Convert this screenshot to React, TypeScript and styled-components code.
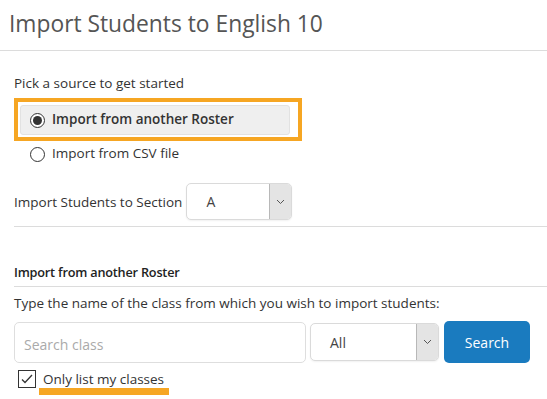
import React from "react";
import styled, { createGlobalStyle } from "styled-components";

const GlobalStyle = createGlobalStyle`
  html, body {
    margin: 0;
    padding: 0;
    background: #fff;
    font-family: "Open Sans", "Liberation Sans", sans-serif;
    color: #333;
  }
`;

const Page = styled.div`
  width: 547px;
  height: 399px;
  overflow: hidden;
`;

const Header = styled.header`
  height: 50px;
  border-bottom: 1px solid #dcdcdc;
  padding-left: 9px;
  display: flex;
  align-items: center;
`;

const Title = styled.h1`
  margin: 0 0 4px;
  font-size: 22.8px;
  font-weight: 400;
  color: #555;
`;

const Body = styled.div`
  padding-left: 14px;
`;

const Label = styled.div<{ top?: number }>`
  font-size: 13.5px;
  line-height: 18px;
  color: #333;
  margin-top: ${({ top }) => top ?? 0}px;
`;

const Highlight = styled.div`
  width: 270px;
  height: 32px;
  border: 4px solid #f6a623;
  padding: 3px 8px 0 2px;
  margin-top: 6px;
`;

const OptionRow = styled.label<{ selected?: boolean }>`
  display: flex;
  align-items: center;
  gap: 7px;
  height: 30px;
  box-sizing: border-box;
  padding-left: 9px;
  font-size: 13.5px;
  color: #333;
  font-weight: ${({ selected }) => (selected ? 600 : 400)};
  background: ${({ selected }) => (selected ? "#efefef" : "transparent")};
  border: 1px solid ${({ selected }) => (selected ? "#e2e2e2" : "transparent")};
  border-radius: 3px;
  span {
    margin-top: -3px;
  }
`;

const CsvRow = styled(OptionRow)`
  margin-left: 6px;
  height: 26px;
  margin-top: 0;
`;

const Radio = styled.i<{ checked?: boolean }>`
  width: 15px;
  height: 15px;
  box-sizing: border-box;
  border: 1px solid #333;
  border-radius: 50%;
  background: #fff;
  display: flex;
  align-items: center;
  justify-content: center;
  flex: none;
  &::after {
    content: "";
    width: 9px;
    height: 9px;
    border-radius: 50%;
    background: #333;
    display: ${({ checked }) => (checked ? "block" : "none")};
  }
`;

const SectionRow = styled.div`
  display: flex;
  align-items: center;
  gap: 4px;
  margin-top: 16px;
  font-size: 13.5px;
`;

const Select = styled.div<{ w: number; h: number }>`
  width: ${({ w }) => w}px;
  height: ${({ h }) => h}px;
  box-sizing: border-box;
  border: 1px solid #dadada;
  border-radius: 5px;
  background: #fff;
  box-shadow: 0 1px 2px rgba(0, 0, 0, 0.06);
  display: flex;
  overflow: hidden;
  font-size: 14px;
  color: #444;
`;

const SelectValue = styled.div`
  flex: 1;
  display: flex;
  align-items: center;
  padding-left: 19px;
`;

const Arrow = styled.div`
  width: 21px;
  background: #e4e4e4;
  border-left: 1px solid #b8b8b8;
  display: flex;
  align-items: center;
  justify-content: center;
`;

const Divider = styled.hr<{ top: number }>`
  border: none;
  border-top: 1px solid #dcdcdc;
  margin: ${({ top }) => top}px 0 0;
`;

const SubHeading = styled.div`
  font-size: 12.7px;
  font-weight: 600;
  letter-spacing: -0.2px;
  color: #222;
  margin-top: 36px;
  line-height: 18px;
`;

const SearchRow = styled.div`
  display: flex;
  align-items: center;
  gap: 4px;
  margin-top: 9px;
`;

const SearchInput = styled.input`
  width: 292px;
  height: 41px;
  box-sizing: border-box;
  border: 1px solid #dedede;
  border-radius: 5px;
  padding: 4px 9px 0;
  font-family: inherit;
  font-size: 14px;
  color: #333;
  outline: none;
  &::placeholder {
    color: #aaa;
  }
`;

const SearchButton = styled.button`
  width: 86px;
  height: 42px;
  margin-left: 1px;
  border: none;
  border-radius: 5px;
  background: #1a7bbf;
  color: #fff;
  font-family: inherit;
  font-size: 14px;
`;

const CheckRow = styled.label`
  display: flex;
  align-items: center;
  gap: 7px;
  margin-top: 7px;
  margin-left: 4px;
  font-size: 13.5px;
  color: #333;
`;

const Box = styled.i`
  width: 18px;
  height: 18px;
  box-sizing: border-box;
  border: 1px solid #333;
  background: #fff;
  display: flex;
  align-items: center;
  justify-content: center;
`;

const Underlined = styled.span`
  position: relative;
  &::after {
    content: "";
    position: absolute;
    left: -4px;
    right: -5px;
    bottom: -7px;
    height: 7px;
    background: #f6a623;
  }
`;

const Chevron = () => (
  <svg width="9" height="6" viewBox="0 0 9 6">
    <path d="M1 1l3.5 3.5L8 1" fill="none" stroke="#555" strokeWidth="1" />
  </svg>
);

export default function App() {
  return (
    <Page>
      <GlobalStyle />
      <Header>
        <Title>Import Students to English 10</Title>
      </Header>
      <Body>
        <Label top={23}>Pick a source to get started</Label>
        <Highlight>
          <OptionRow selected>
            <Radio checked />
            <span>Import from another Roster</span>
          </OptionRow>
        </Highlight>
        <CsvRow>
          <Radio />
          <span>Import from CSV file</span>
        </CsvRow>
        <SectionRow>
          <span>Import Students to Section</span>
          <Select w={106} h={37}>
            <SelectValue>A</SelectValue>
            <Arrow>
              <Chevron />
            </Arrow>
          </Select>
        </SectionRow>
        <Divider top={6} />
        <SubHeading>Import from another Roster</SubHeading>
        <Divider top={5} />
        <Label top={7}>Type the name of the class from which you wish to import students:</Label>
        <SearchRow>
          <SearchInput placeholder="Search class" />
          <Select w={129} h={38}>
            <SelectValue>All</SelectValue>
            <Arrow>
              <Chevron />
            </Arrow>
          </Select>
          <SearchButton>Search</SearchButton>
        </SearchRow>
        <CheckRow>
          <Box>
            <svg width="12" height="10" viewBox="0 0 12 10">
              <path d="M1 5.5l3 3L11 1" fill="none" stroke="#333" strokeWidth="1.3" />
            </svg>
          </Box>
          <Underlined>Only list my classes</Underlined>
        </CheckRow>
      </Body>
    </Page>
  );
}
